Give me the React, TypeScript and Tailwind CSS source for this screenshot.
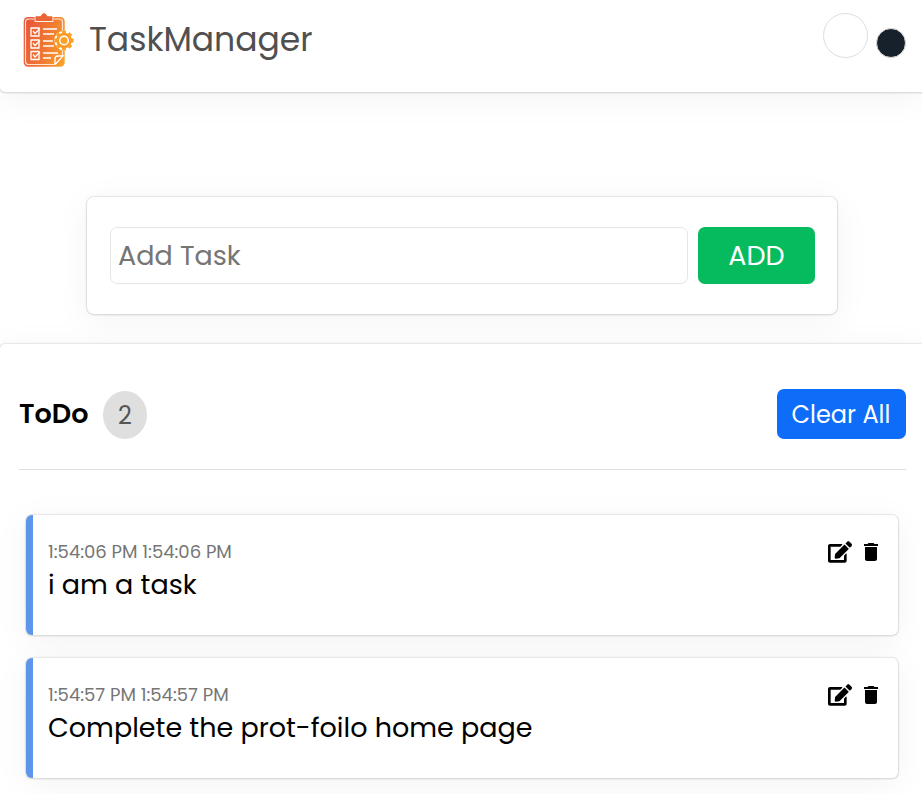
import React from "react";
import { FaEdit } from "react-icons/fa";
import { MdDelete } from "react-icons/md";

const panel =
  "bg-white shadow-[0_6px_36px_0_rgba(0,0,0,0.05),0_1px_1px_1px_rgba(0,0,0,0.04),0_0_0_1.25px_rgba(0,0,0,0.07)]";

const tasks = [
  { time: "1:54:06 PM 1:54:06 PM", title: "i am a task" },
  { time: "1:54:57 PM 1:54:57 PM", title: "Complete the prot-foilo home page" },
];

function Logo() {
  return (
    <svg width="52" height="56" viewBox="0 0 52 56" fill="none">
      <defs>
        <linearGradient id="orange" x1="0" y1="20" x2="50" y2="34" gradientUnits="userSpaceOnUse">
          <stop stopColor="#ea5438" />
          <stop offset="0.5" stopColor="#f07932" />
          <stop offset="1" stopColor="#fbac27" />
        </linearGradient>
      </defs>
      <rect x="0.7" y="5" width="41" height="49.700" rx="4.500" fill="url(#orange)" />
      <path d="M11 7H5.500Q2.500 7 2.500 10V49.500Q2.500 52.500 5.500 52.500H31L39.500 44V10Q39.500 7 36.500 7H31" stroke="#ffe4d6" strokeWidth="1.200" />
      <path d="M12 4H17.500Q18.500 1 21 1T24.500 4H30V9.500H12Z" fill="url(#orange)" stroke="#fff" strokeWidth="0.900" />
      <path d="M13 4.400H18Q19 1.200 21 1.200T24 4.400H29V8.800H13Z" fill="#ec6436" />
      <g stroke="#fff" strokeWidth="1.300">
        <path d="M8 16H16V24H8ZM8 28H16V36H8ZM8 39.500H16V47.500H8Z" />
        <path d="M10 19L12 21.500L17 16.500M10 31L12 33.500L17 28.500M10 42.500L12 45L17 40" />
        <path d="M20 17H34M20 22H31M20 29H30M20 34H31M20 41H35M20 46H28" />
      </g>
      <path d="M32 52V47Q32 44 35 44H40L32.500 52Z" fill="#f28a31" stroke="#fff" strokeWidth="1.300" />
      <circle cx="41" cy="28.500" r="9.800" fill="#fff" />
      <path
        d="M41 18.800V38.200M31.300 28.500H50.700M34.100 21.600L47.900 35.400M34.100 35.400L47.900 21.600"
        stroke="#fba328"
        strokeWidth="4"
      />
      <circle cx="41" cy="28.500" r="7.800" fill="#f99c2a" />
      <circle cx="41" cy="28.500" r="4.300" stroke="#fff" strokeWidth="1.500" fill="#fba328" />
    </svg>
  );
}

export default function App() {
  return (
    <div className="flex h-[794px] w-full flex-col overflow-hidden bg-white font-['Poppins','Inter',sans-serif] text-black">
      <header className={`flex h-[92px] shrink-0 items-start justify-between rounded-bl-[5px] pl-[23px] pr-4 ${panel}`}>
        <div className="flex items-start">
          <div className="pt-3">
            <Logo />
          </div>
          <h1 className="ml-[14px] mt-[14px] whitespace-nowrap text-[33px] leading-[51px] text-[#505050]">
            TaskManager
          </h1>
        </div>
        <div className="flex items-start gap-2 pt-[13px]">
          <button className="size-[45px] rounded-full border border-[#dedede] bg-white" />
          <button className="mt-[15px] size-[30px] rounded-full border border-[#dedede] bg-[#17212b]" />
        </div>
      </header>

      <section className={`ml-[87px] mr-[85px] mt-[105px] flex h-[117px] shrink-0 items-start gap-[10px] rounded-[7px] pl-[23px] pr-[22px] pt-[30px] ${panel}`}>
        <input
          placeholder="Add Task"
          className="h-[57px] min-w-0 flex-1 rounded-[7px] border border-[#e6e6e6] px-[7px] text-[27px] placeholder:text-[#757575]"
        />
        <button className="h-[57px] w-[117px] rounded-[7px] bg-[#05bb5d] pt-0.5 text-[27px] text-white">ADD</button>
      </section>

      <main className={`mt-[30px] flex flex-1 flex-col rounded-tl-[5px] px-[19px] pt-[45px] ${panel} relative`}>
        <div className="mr-[-3px] flex h-[81px] shrink-0 items-start justify-between border-b border-[#dfdfdf]">
          <div className="flex items-start">
            <h2 className="w-[69px] whitespace-nowrap pt-[5px] text-[27px] font-semibold leading-10">ToDo</h2>
            <span className="ml-[15px] mt-0.5 flex h-12 w-11 items-center justify-center rounded-[50%] bg-[#dfdfdf] pt-0.5 text-[24px] text-[#555555]">
              2
            </span>
          </div>
          <button className="h-[50px] w-[129px] whitespace-nowrap rounded-[7px] bg-[#0d6cf8] pr-px pt-0.5 text-[24px] text-white">
            Clear All
          </button>
        </div>
        <ul className="ml-[7px] mr-[5px] mt-[45px] flex flex-col gap-[23px]">
          {tasks.map((task) => (
            <li
              key={task.time}
              className={`flex h-[120px] items-start justify-between rounded-[6px] border-l-[7px] border-[#5c95e9] pl-[15px] pr-[15px] pt-[22px] ${panel}`}
            >
              <div className="pt-px">
                <p className="whitespace-nowrap text-[18px] leading-7 text-[#757575]">{task.time}</p>
                <p className="whitespace-nowrap text-[27px] leading-[38px]">{task.title}</p>
              </div>
              <div className="flex items-start gap-[7px] pt-[3px]">
                <FaEdit size={24} />
                <MdDelete size={24} />
              </div>
            </li>
          ))}
        </ul>
      </main>
    </div>
  );
}
